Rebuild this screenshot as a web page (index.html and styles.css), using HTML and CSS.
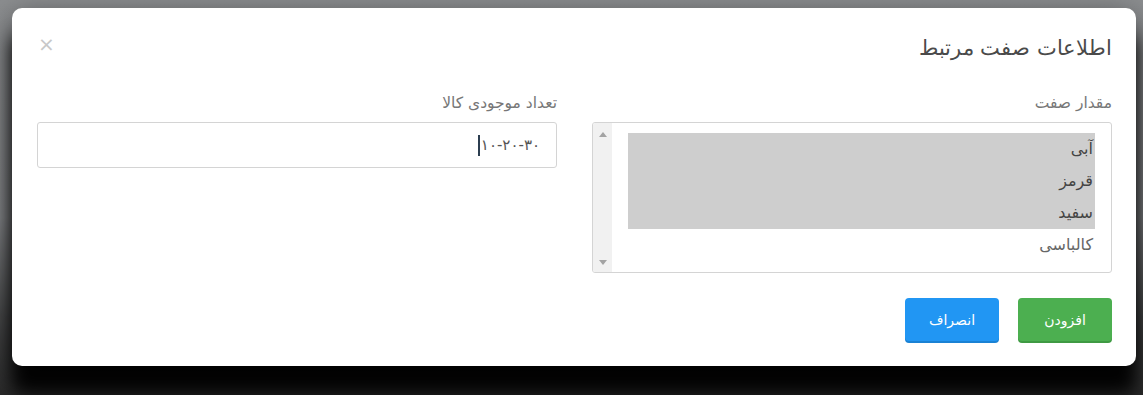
FILE: index.html
```html
<!DOCTYPE html>
<html lang="fa" dir="rtl">
<head>
    <meta charset="UTF-8">
    <title>اطلاعات صفت مرتبط</title>
    <link rel="stylesheet" href="styles.css">
</head>
<body>
    <div class="backdrop">
        <div class="modal">
            <div class="modal-header">
                <h4 class="modal-title">اطلاعات صفت مرتبط</h4>
                <span class="close">&times;</span>
            </div>

            <div class="modal-body">
                <div class="form-group">
                    <label>مقدار صفت</label>
                    <div class="listbox">
                        <div class="options">
                            <div class="option selected">آبی</div>
                            <div class="option selected">قرمز</div>
                            <div class="option selected">سفید</div>
                            <div class="option">کالباسی</div>
                        </div>
                        <div class="scrollbar">
                            <span class="arrow up"></span>
                            <span class="arrow down"></span>
                        </div>
                    </div>
                </div>
                <div class="form-group">
                    <label>تعداد موجودی کالا</label>
                    <div class="input">
                        <span class="value">۱۰-۲۰-۳۰</span><span class="caret"></span>
                    </div>
                </div>
            </div>

            <div class="modal-footer">
                <button class="btn btn-success">افزودن</button>
                <button class="btn btn-primary">انصراف</button>
            </div>
        </div>
    </div>
</body>
</html>
```

FILE: styles.css
```css
html, body {
    margin: 0;
    height: 100%;
}
body {
    font-family: "DejaVu Sans", "Noto Sans", sans-serif;
    background: linear-gradient(#8c8e90 0, #85878a 55%, #4a4b4c 80%, #2a2a2a 100%);
    overflow: hidden;
}
.backdrop {
    padding: 8px 7px 0 12px;
}
.modal {
    background-color: #fff;
    border-radius: 10px;
    height: 358px;
    box-sizing: border-box;
    box-shadow: 0 28px 18px rgba(0,0,0,0.95), 0 8px 30px rgba(0,0,0,0.5);
    display: flex;
    flex-direction: column;
}
.modal-header {
    display: flex;
    justify-content: space-between;
    align-items: center;
    padding: 27px 24px 0 25px;
    height: 26px;
}
.modal-title {
    margin: 0;
    font-size: 21px;
    font-weight: 300;
    color: #4a4a4a;
    letter-spacing: -0.3px;
}
.close {
    font-family: "DejaVu Sans", sans-serif;
    font-size: 20px;
    color: #c8c8c8;
    margin-left: 1px;
    margin-top: -8px;
}
.modal-body {
    display: grid;
    grid-template-columns: 520px 520px;
    column-gap: 35px;
    padding: 32px 24px 0 25px;
}
.form-group label {
    display: block;
    font-size: 15.5px;
    color: #777;
    line-height: 20px;
    margin-bottom: 9px;
}
.listbox {
    display: flex;
    height: 151px;
    box-sizing: border-box;
    border: 1px solid #d4d4d4;
    border-radius: 3px;
    overflow: hidden;
}
.options {
    flex: 1;
    padding: 10px 16px 0 16px;
}
.option {
    height: 32px;
    line-height: 32px;
    font-size: 16px;
    color: #666;
    padding-right: 2px;
}
.option.selected {
    background-color: #cecece;
    color: #444;
}
.scrollbar {
    width: 19px;
    background-color: #f1f1f1;
    display: flex;
    flex-direction: column;
    justify-content: space-between;
    align-items: center;
    padding: 9px 0 7px;
}
.arrow {
    width: 0;
    height: 0;
    border-left: 4px solid transparent;
    border-right: 4px solid transparent;
}
.arrow.up {
    border-bottom: 5px solid #a3a3a3;
}
.arrow.down {
    border-top: 5px solid #a3a3a3;
}
.input {
    height: 46px;
    box-sizing: border-box;
    border: 1px solid #d4d4d4;
    border-radius: 3px;
    display: flex;
    align-items: center;
    padding-right: 16px;
}
.value {
    font-size: 15px;
    color: #555;
    direction: ltr;
}
.caret {
    width: 2px;
    height: 21px;
    background-color: #2c3e50;
    margin-right: 1px;
}
.modal-footer {
    display: flex;
    gap: 19px;
    padding: 25px 24px 0;
}
.btn {
    font-family: "DejaVu Sans", sans-serif;
    width: 94px;
    height: 43px;
    border: none;
    border-radius: 4px;
    color: #fff;
    font-size: 14px;
    cursor: pointer;
}
.btn-success {
    background-color: #4caf50;
    box-shadow: 0 2px 0 #3f9a43;
}
.btn-primary {
    background-color: #2196f3;
    box-shadow: 0 2px 0 #1a82d4;
}
```
